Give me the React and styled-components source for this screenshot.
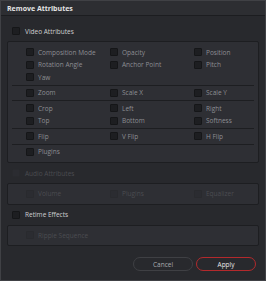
import React from 'react';
import styled, { createGlobalStyle } from 'styled-components';

const GlobalStyle = createGlobalStyle`
  html, body {
    margin: 0;
    padding: 0;
    background: #28292d;
  }
  body {
    font-family: "Open Sans", "Liberation Sans", sans-serif;
  }
`;

const Window = styled.div`
  width: 266px;
  height: 281px;
  box-sizing: border-box;
  border: 1px solid #404145;
  background: #28292d;
  display: flex;
  flex-direction: column;
`;

const TitleBar = styled.div`
  height: 14px;
  padding-left: 6px;
  display: flex;
  align-items: center;
  background: #2d2e32;
  border-bottom: 1px solid #1c1d20;
  color: #e4e4e4;
  font-size: 7px;
  font-weight: 700;
`;

const Body = styled.div`
  flex: 1;
  padding: 5px 6px 0;
  display: flex;
  flex-direction: column;
`;

const SectionHeader = styled.div`
  height: 20px;
  padding-left: 5px;
  display: flex;
  align-items: center;
  gap: 5px;
  font-size: 6.5px;
  color: ${(p) => (p.disabled ? '#4b4c51' : '#cfcfd1')};
`;

const Box = styled.span`
  width: 8px;
  height: 8px;
  box-sizing: border-box;
  border-radius: 1px;
  flex-shrink: 0;
  background: ${(p) => (p.disabled ? '#2b2c31' : '#1d1e21')};
  border: 1px solid ${(p) => (p.disabled ? '#292a2e' : '#151618')};
`;

const Panel = styled.div`
  border: 1px solid #1d1e21;
  border-radius: 2px;
  background: #2e2f34;
  padding: ${(p) => (p.single ? '3.5px 0' : '3px 0')};
`;

const Group = styled.div`
  padding: ${(p) => (p.flat ? '0' : '1px 0')};
`;

const Divider = styled.div`
  height: 1px;
  margin: 0 4px;
  background: #1d1e21;
`;

const Row = styled.div`
  height: 12.5px;
  padding-left: 18px;
  display: grid;
  grid-template-columns: 84px 84px 1fr;
  align-items: center;
`;

const Item = styled.div`
  display: flex;
  align-items: center;
  gap: 4px;
  font-size: 6.5px;
  white-space: nowrap;
  color: ${(p) => (p.disabled ? '#4b4c51' : '#8d8e93')};
`;

const ButtonRow = styled.div`
  margin-top: 11px;
  padding-right: 3px;
  display: flex;
  justify-content: flex-end;
  gap: 3px;
`;

const Button = styled.button`
  width: 60px;
  height: 14px;
  padding: 0;
  border-radius: 7px;
  background: #28292d;
  border: 1px solid ${(p) => (p.primary ? '#b3292c' : '#3f4044')};
  color: ${(p) => (p.primary ? '#e8e8e8' : '#a9aaae')};
  font-family: "Open Sans", "Liberation Sans", sans-serif;
  font-size: 6.5px;
`;

const videoGroups = [
  [
    ['Composition Mode', 'Opacity', 'Position'],
    ['Rotation Angle', 'Anchor Point', 'Pitch'],
    ['Yaw'],
  ],
  [['Zoom', 'Scale X', 'Scale Y']],
  [
    ['Crop', 'Left', 'Right'],
    ['Top', 'Bottom', 'Softness'],
  ],
  [['Flip', 'V Flip', 'H Flip']],
  [['Plugins']],
];

const Rows = ({ rows, disabled }) =>
  rows.map((row, i) => (
    <Row key={i}>
      {row.map((label) => (
        <Item key={label} disabled={disabled}>
          <Box disabled={disabled} />
          {label}
        </Item>
      ))}
    </Row>
  ));

const App = () => {
  return (
    <>
      <GlobalStyle />
      <Window>
        <TitleBar>Remove Attributes</TitleBar>
        <Body>
          <SectionHeader>
            <Box />
            Video Attributes
          </SectionHeader>
          <Panel>
            {videoGroups.map((rows, i) => (
              <React.Fragment key={i}>
                {i > 0 && <Divider />}
                <Group>
                  <Rows rows={rows} />
                </Group>
              </React.Fragment>
            ))}
          </Panel>

          <SectionHeader disabled>
            <Box disabled />
            Audio Attributes
          </SectionHeader>
          <Panel single>
            <Rows rows={[['Volume', 'Plugins', 'Equalizer']]} disabled />
          </Panel>

          <SectionHeader>
            <Box />
            Retime Effects
          </SectionHeader>
          <Panel single>
            <Rows rows={[['Ripple Sequence']]} disabled />
          </Panel>

          <ButtonRow>
            <Button>Cancel</Button>
            <Button primary>Apply</Button>
          </ButtonRow>
        </Body>
      </Window>
    </>
  );
};

export default App;
